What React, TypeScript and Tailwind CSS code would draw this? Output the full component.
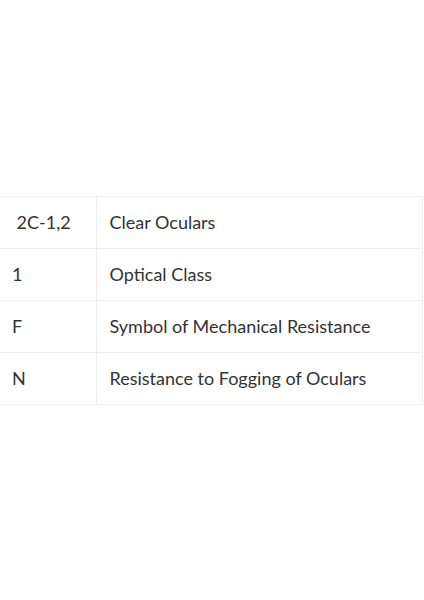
const rows: [string, string][] = [
  ["\u00a02C-1,2", "Clear Oculars"],
  ["1", "Optical Class"],
  ["F", "Symbol of Mechanical Resistance"],
  ["N", "Resistance to Fogging of Oculars"],
];

export default function App() {
  return (
    <div className="w-[424px] h-[600px] bg-white pt-[196px] font-['Lato','Open_Sans',sans-serif] text-[#333]">
      <table className="w-[423px] border-collapse text-[18px]">
        <tbody>
          {rows.map(([code, label]) => (
            <tr key={code} className="h-[52px] border-t border-b border-[#eeeeee]">
              <td className="w-[96px] pl-[12px] border-r border-[#eeeeee]">{code}</td>
              <td className="pl-[13px] border-r border-[#eeeeee]">{label}</td>
            </tr>
          ))}
        </tbody>
      </table>
    </div>
  );
}
